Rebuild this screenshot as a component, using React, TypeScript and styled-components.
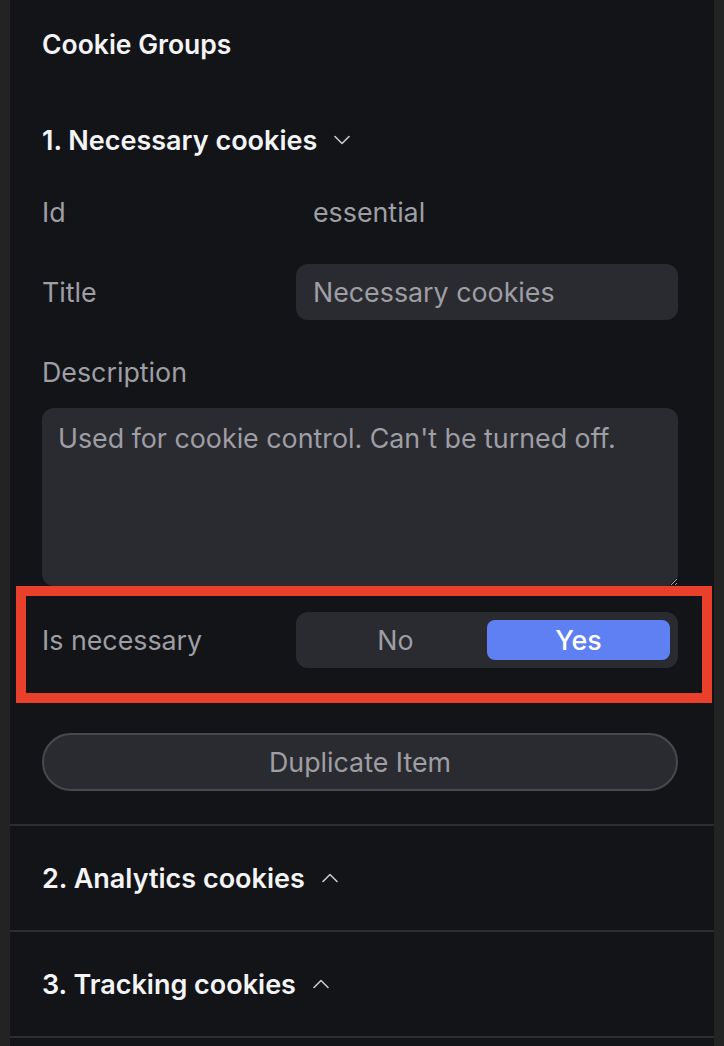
import React from 'react';
import styled, { createGlobalStyle } from 'styled-components';

const Global = createGlobalStyle`
  html, body {
    margin: 0;
    padding: 0;
    background: #232324;
  }
  body {
    font-family: Inter, "Noto Sans", sans-serif;
    -webkit-font-smoothing: antialiased;
  }
`;

const Shell = styled.div`
  padding: 0 10px;
  min-height: 1046px;
  background: #232324;
`;

const Panel = styled.div`
  background: #131418;
  min-height: 1046px;
`;

const PanelTitle = styled.h2`
  margin: 0;
  padding: 28px 36px 28px 32px;
  font-size: 26.5px;
  line-height: 32px;
  font-weight: 600;
  color: #f4f4f6;
`;

const Group = styled.section`
  border-bottom: 2px solid #2c2d31;
  padding: 0 36px 0 32px;
`;

const GroupHeader = styled.div`
  display: flex;
  align-items: center;
  gap: 17px;
  height: 104px;
  font-size: 27px;
  font-weight: 600;
  color: #f4f4f6;
`;

const Chevron = styled.svg`
  width: 16px;
  height: 10px;
  flex: none;
`;

const Body = styled.div`
  display: flex;
  flex-direction: column;
  padding-bottom: 33px;
`;

const Field = styled.div<{ $top?: number; $height?: number }>`
  position: relative;
  display: grid;
  grid-template-columns: 254px 1fr;
  align-items: center;
  margin-top: ${(p) => p.$top ?? 0}px;
  min-height: ${(p) => p.$height ?? 56}px;
`;

const Label = styled.div`
  font-size: 26.8px;
  color: #9e9ea4;
`;

const Value = styled.div`
  padding: 0 17px;
  font-size: 26.8px;
  color: #9e9ea4;
`;

const Input = styled.div`
  height: 56px;
  display: flex;
  align-items: center;
  padding: 0 17px;
  border-radius: 12px;
  background: #2a2b30;
  font-size: 26.8px;
  color: #9e9ea4;
`;

const TextArea = styled.textarea`
  box-sizing: border-box;
  margin-top: 8px;
  width: 100%;
  height: 178px;
  padding: 13px 16px;
  border: none;
  border-radius: 12px;
  background: #2a2b30;
  color: #9e9ea4;
  font-family: Inter, "Noto Sans", sans-serif;
  font-size: 26.8px;
  line-height: 34px;
  outline: none;
  resize: vertical;
`;

const Segmented = styled.div`
  display: flex;
  height: 56px;
  box-sizing: border-box;
  padding: 8px;
  border-radius: 12px;
  background: #2a2b30;
`;

const Option = styled.div<{ $active?: boolean }>`
  flex: 1;
  display: flex;
  align-items: center;
  justify-content: center;
  border-radius: 8px;
  font-size: 26.8px;
  font-weight: ${(p) => (p.$active ? 500 : 400)};
  color: ${(p) => (p.$active ? '#ffffff' : '#9e9ea4')};
  background: ${(p) => (p.$active ? '#5f80f3' : 'transparent')};
`;

const Highlight = styled.div`
  position: absolute;
  left: -26px;
  top: -26px;
  right: -34px;
  bottom: -35px;
  border: 10px solid #e8402a;
  pointer-events: none;
`;

const DuplicateButton = styled.button`
  margin-top: 65px;
  height: 58px;
  border: 2px solid #48494e;
  border-radius: 29px;
  background: #2a2b30;
  color: #9e9ea4;
  font-family: Inter, "Noto Sans", sans-serif;
  font-size: 26.8px;
`;

function ChevronIcon({ up }: { up?: boolean }) {
  return (
    <Chevron viewBox="0 0 16 10" fill="none">
      <polyline
        points={up ? '1,8.5 8,1.5 15,8.5' : '1,1.5 8,8.5 15,1.5'}
        stroke="#c9c9ce"
        strokeWidth="1.6"
        strokeLinecap="round"
        strokeLinejoin="round"
      />
    </Chevron>
  );
}

const collapsed = ['2. Analytics cookies', '3. Tracking cookies'];

export default function App() {
  return (
    <>
      <Global />
      <Shell>
        <Panel>
          <PanelTitle>Cookie Groups</PanelTitle>
          <Group>
            <GroupHeader>
              1. Necessary cookies
              <ChevronIcon />
            </GroupHeader>
            <Body>
              <Field $height={40}>
                <Label>Id</Label>
                <Value>essential</Value>
              </Field>
              <Field $top={32}>
                <Label>Title</Label>
                <Input>Necessary cookies</Input>
              </Field>
              <Field $top={24} $height={56}>
                <Label>Description</Label>
              </Field>
              <TextArea readOnly defaultValue="Used for cookie control. Can't be turned off." />
              <Field $top={26}>
                <Label>Is necessary</Label>
                <Segmented>
                  <Option>No</Option>
                  <Option $active>Yes</Option>
                </Segmented>
                <Highlight />
              </Field>
              <DuplicateButton>Duplicate Item</DuplicateButton>
            </Body>
          </Group>
          {collapsed.map((name) => (
            <Group key={name}>
              <GroupHeader>
                {name}
                <ChevronIcon up />
              </GroupHeader>
            </Group>
          ))}
        </Panel>
      </Shell>
    </>
  );
}
